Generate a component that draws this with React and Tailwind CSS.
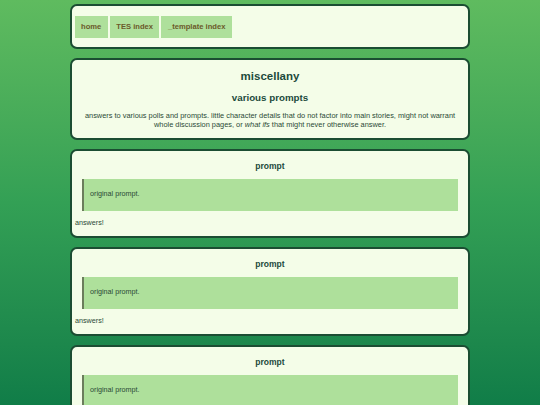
const links = ["home", "TES index", "_template index"];

const prompts = [
  { title: "prompt", quote: "original prompt.", answer: "answers!" },
  { title: "prompt", quote: "original prompt.", answer: "answers!" },
  { title: "prompt", quote: "original prompt.", answer: "answers!" },
];

const Card = ({ className = "", children }) => (
  <div
    className={`w-[400px] mx-auto border-2 border-[#1b4d32] rounded-[7px] bg-[#f4fde8] ${className}`}
  >
    {children}
  </div>
);

const PromptCard = ({ title, quote, answer }) => (
  <Card className="px-[3px] pt-[10px] pb-[9px]">
    <h3 className="text-center text-[8.5px] leading-[10px] font-bold text-[#1c4a3c]">
      {title}
    </h3>
    <blockquote className="mx-[7px] mt-[8px] h-[32px] flex items-center pl-[6px] bg-[#aee09b] border-l-2 border-[#6b7d5c] text-[7.2px] text-[#2a4a36]">
      {quote}
    </blockquote>
    <p className="mt-[8.5px] text-[7.2px] leading-[8px] text-[#2a4a36]">{answer}</p>
  </Card>
);

export default function App() {
  return (
    <div
      className="min-h-screen bg-fixed bg-gradient-to-b from-[#5fbb5f] via-[#33a055] to-[#107d48] pt-[4px] pb-[8px] flex flex-col gap-[8.5px]"
      style={{ fontFamily: '"Liberation Sans", Arial, sans-serif' }}
    >
      <Card className="px-[2.5px] py-[9.5px]">
        <nav className="flex gap-[2px]">
          {links.map((l) => (
            <a
              key={l}
              className="h-[22px] px-[6.5px] flex items-center bg-[#aee09b] text-[7.6px] font-bold text-[#6b5a2a] cursor-pointer"
            >
              {l}
            </a>
          ))}
        </nav>
      </Card>

      <Card className="px-[8px] pt-[10px] pb-[9px] text-center text-[#1c4a3c]">
        <h1 className="text-[11.5px] leading-[13px] font-bold">miscellany</h1>
        <h2 className="mt-[9px] text-[9.75px] leading-[11px] font-bold">
          various prompts
        </h2>
        <p className="mt-[8.5px] text-[7.4px] leading-[9px] text-[#2a4a36]">
          answers to various polls and prompts. little character details that do
          not factor into main stories, might not warrant whole discussion pages,
          or <em>what ifs</em> that might never otherwise answer.
        </p>
      </Card>

      {prompts.map((p, i) => (
        <PromptCard key={i} {...p} />
      ))}
    </div>
  );
}
